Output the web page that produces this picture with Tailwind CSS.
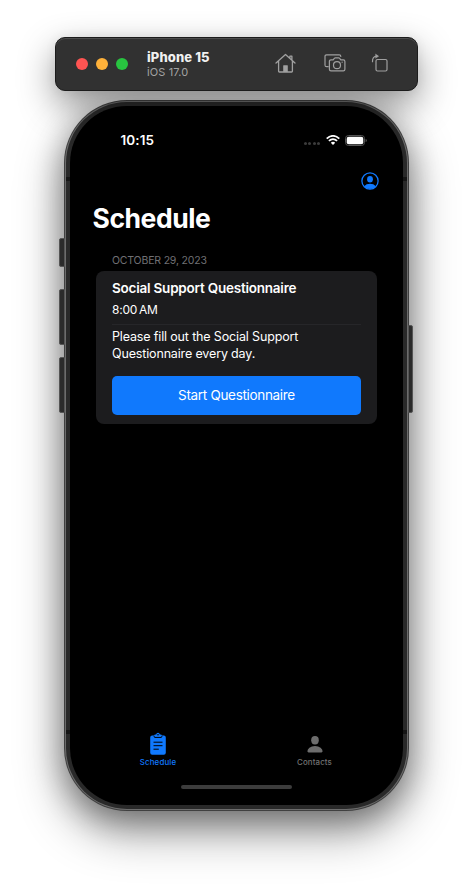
<!DOCTYPE html>
<html lang="en">
<head>
<meta charset="utf-8">
<title>iPhone 15 – Schedule</title>
<script src="https://cdn.jsdelivr.net/npm/@tailwindcss/browser@4"></script>
</head>
<body class="h-[886px] w-[473px] overflow-hidden bg-white font-['Inter','Liberation_Sans',sans-serif]">
<div class="flex flex-col pt-[37px]">
  <!-- Simulator toolbar -->
  <header class="relative z-10 ml-[55px] flex h-[54px] w-[363px] items-center rounded-[10px] border border-[#1c1c1c] bg-[#313131] shadow-[inset_0_1px_0_#4c4c4c,0_14px_36px_rgba(0,0,0,0.42),0_0_12px_rgba(0,0,0,0.06)]">
    <div class="ml-5 flex gap-2">
      <span class="size-3 rounded-full bg-[#ff5452]"></span>
      <span class="size-3 rounded-full bg-[#feb13a]"></span>
      <span class="size-3 rounded-full bg-[#28c440]"></span>
    </div>
    <div class="ml-[19px] w-[128px]">
      <div class="text-[13px] leading-[15px] font-extrabold tracking-[0.120px] text-[#f0f0f0]">iPhone 15</div>
      <div class="text-[11px] leading-[14px] tracking-[0.120px] text-[#a3a3a3]">iOS 17.0</div>
    </div>
    <div class="-mt-[3px] flex items-center text-[#a0a0a0]">
      <svg class="h-[20px] w-[21px]" viewBox="0 0 21 20" fill="none" stroke="currentColor" stroke-width="1.3" stroke-linecap="round" stroke-linejoin="round"><path d="M1 10 10.5 1.5 20 10M3.6 8v10.2q0 .8.8.8h12.2q.8 0 .8-.8V8M14.9 5.2V3.2h2v4"/><path d="M8.2 19v-6.2q0-.5.5-.5h3.6q.5 0 .5.5V19z" fill="currentColor" stroke="none"/></svg>
      <svg class="ml-[28px] h-[20px] w-[22px]" viewBox="0 0 22 20" fill="none" stroke="currentColor" stroke-width="1.2" stroke-linecap="round" stroke-linejoin="round"><path d="M4.2 13.7H2.6Q1 13.7 1 12.100V3.400Q1 1.800 2.600 1.800H15.200Q16.800 1.800 16.800 3.500"/><path d="M7 6.800h2.200l1.300-1.600q.3-.4.800-.4h3.400q.5 0 .8.400l1.300 1.600H19.300q1.600 0 1.600 1.600v7.800q0 1.600-1.600 1.600H7q-1.600 0-1.600-1.600V8.400Q5.400 6.800 7 6.800z"/><circle cx="13" cy="12.200" r="3.500"/><path d="M18.100 9.200h.1"/></svg>
      <svg class="ml-[25px] h-[20px] w-[18px]" viewBox="0 0 18 20" fill="none" stroke="currentColor" stroke-width="1.2" stroke-linecap="round" stroke-linejoin="round"><rect x="5" y="6.500" width="11" height="11.500" rx="1.500"/><path d="M1.500 8.700C1.300 5 2.800 3.200 6 3.200"/><path d="M4.800 1.300 7.600 3.200 4.800 5z" fill="currentColor" stroke-width=".5"/></svg>
    </div>
  </header>

  <!-- Device -->
  <main class="relative mt-[9px] ml-[64px] h-[711px] w-[345px] rounded-[63px] bg-[#404040] p-px shadow-[0_20px_48px_rgba(0,0,0,0.42),0_8px_30px_rgba(0,0,0,0.32)]">
    <span class="absolute top-[138px] -left-[5px] h-[29px] w-[6px] rounded-l-[2px] border border-[#555] bg-[#2b2b2b]"></span>
    <span class="absolute top-[189px] -left-[5px] h-[56px] w-[6px] rounded-l-[2px] border border-[#555] bg-[#2b2b2b]"></span>
    <span class="absolute top-[257px] -left-[5px] h-[56px] w-[6px] rounded-l-[2px] border border-[#555] bg-[#2b2b2b]"></span>
    <span class="absolute top-[225px] -right-[4px] h-[88px] w-[5px] rounded-r-[2px] border border-[#555] bg-[#2b2b2b]"></span>
    <div class="relative h-full rounded-[62px] bg-[#6c6c6c] p-px">
      <!-- Antenna bands -->
      <span class="absolute top-[76px] left-px h-[4px] w-[4px] bg-[#151515]"></span>
      <span class="absolute top-[76px] right-px h-[4px] w-[4px] bg-[#151515]"></span>
      <span class="absolute bottom-[76px] left-px h-[4px] w-[4px] bg-[#151515]"></span>
      <span class="absolute right-px bottom-[76px] h-[4px] w-[4px] bg-[#151515]"></span>
      <div class="h-full rounded-[61px] bg-[#292929] p-1">
        <div class="flex h-full flex-col overflow-hidden rounded-[57px] bg-black text-white">
          <!-- Status bar -->
          <div class="flex h-[60px] shrink-0 items-center pt-[8px] pr-[36px] pl-[50.500px]">
            <span class="text-[13.500px] leading-4 font-semibold tracking-[0.100px]">10:15</span>
            <span class="ml-auto mt-[7px] flex gap-[1.500px]"><i class="size-[3px] rounded-full bg-[#3c3c3c]"></i><i class="size-[3px] rounded-full bg-[#3c3c3c]"></i><i class="size-[3px] rounded-full bg-[#3c3c3c]"></i><i class="size-[3px] rounded-full bg-[#3c3c3c]"></i></span>
            <svg class="ml-[6px] h-[10px] w-[14px]" viewBox="0 0 14 10" fill="none" stroke="#fff" stroke-width="1.800"><path d="M.7 3.600Q7-1.900 13.300 3.600M2.900 5.900Q7 2.300 11.100 5.900"/><path d="M7 10 4.800 7.700Q7 6 9.200 7.700z" fill="#fff" stroke="none"/></svg>
            <svg class="ml-[5px] h-[11px] w-[22px]" viewBox="0 0 22 11"><rect x=".5" y=".5" width="19" height="10" rx="3" fill="none" stroke="#555"/><rect x="1.700" y="1.700" width="16.600" height="7.600" rx="2" fill="#fff"/><path d="M20.700 3.800q1 .6 1 1.700t-1 1.700z" fill="#666"/></svg>
          </div>
          <div class="flex h-[30px] shrink-0 items-center justify-end pr-[24px]">
            <svg class="size-[18px]" viewBox="0 0 18 18"><circle cx="9" cy="9" r="8.100" fill="none" stroke="#1079fd" stroke-width="1.300"/><ellipse cx="9" cy="7.200" rx="2.900" ry="3.200" fill="#1079fd"/><path d="M3.200 14.200Q5.200 11.800 9 11.800t5.800 2.400Q12.500 17 9 17t-5.800-2.800z" fill="#1079fd"/></svg>
          </div>
          <h1 class="mt-[5px] pl-[22.500px] text-[26.500px] leading-[34px] font-bold tracking-[-0.450px]">Schedule</h1>
          <div class="mt-[18px] pl-[42px] text-[10.500px] leading-[16px] tracking-[-0.180px] text-[#707074]">OCTOBER 29, 2023</div>
          <section class="mt-[2px] ml-[26px] h-[153px] w-[281px] rounded-[8px] bg-[#1c1c1e] px-4 pt-[8px]">
            <h2 class="text-[13.500px] leading-[18px] font-semibold tracking-[-0.220px]">Social Support Questionnaire</h2>
            <div class="mt-[4px] text-[12px] leading-[18px] tracking-[-0.250px]">8:00&#8201;AM</div>
            <div class="mt-[4.500px] h-px bg-[#262629]"></div>
            <p class="mt-[3.500px] text-[12.500px] leading-[17px] tracking-[-0.150px]">Please fill out the Social Support<br>Questionnaire every day.</p>
            <button class="mt-[13.500px] flex h-[39.500px] w-full items-center justify-center rounded-[5px] bg-[#1079fd] text-[13.500px] tracking-[-0.320px]">Start Questionnaire</button>
          </section>
          <!-- Tab bar -->
          <nav class="mt-auto flex h-[53px] shrink-0 px-[10px]">
            <div class="flex w-[156px] flex-col items-center text-[#1079fd]">
              <svg class="h-[24px] w-[16px]" viewBox="0 0 16 24"><path d="M2.200 3.600h2q.1-.8 1-1h1Q6.400.800 8 .800T9.800 2.600h1q.9.200 1 1h2q2 0 2 2v15.200q0 2-2 2H2.200q-2 0-2-2V5.600q0-2 2-2z" fill="currentColor"/><circle cx="8" cy="2.700" r=".8"/><path d="M4.200 4v.7q0 .7.700.7h6.200q.7 0 .7-.7V4M3.500 10.200h9M3.500 13.700h9M3.500 17.200h5.300" fill="none" stroke="#000" stroke-width="1"/></svg>
              <span class="text-[7.900px] leading-[12px] font-medium tracking-[0.140px]">Schedule</span>
            </div>
            <div class="flex w-[157px] flex-col items-center text-[#6d6d6d]">
              <svg class="h-[24px] w-[16px]" viewBox="0 0 16 24" fill="currentColor"><ellipse cx="8" cy="8.200" rx="3.800" ry="4.200"/><path d="M.4 19.300q0-1.800 2-3.600Q4.600 14 8 14t5.600 1.700q2 1.800 2 3.600 0 1.100-1.200 1.100H1.600q-1.200 0-1.200-1.100z"/></svg>
              <span class="text-[7.900px] leading-[12px] font-medium tracking-[0.140px] text-[#737373]">Contacts</span>
            </div>
          </nav>
          <div class="mx-auto mb-[16.500px] h-[4px] w-[111px] shrink-0 rounded-full bg-[#3c3c3c]"></div>
        </div>
      </div>
    </div>
  </main>
</div>
</body>
</html>
